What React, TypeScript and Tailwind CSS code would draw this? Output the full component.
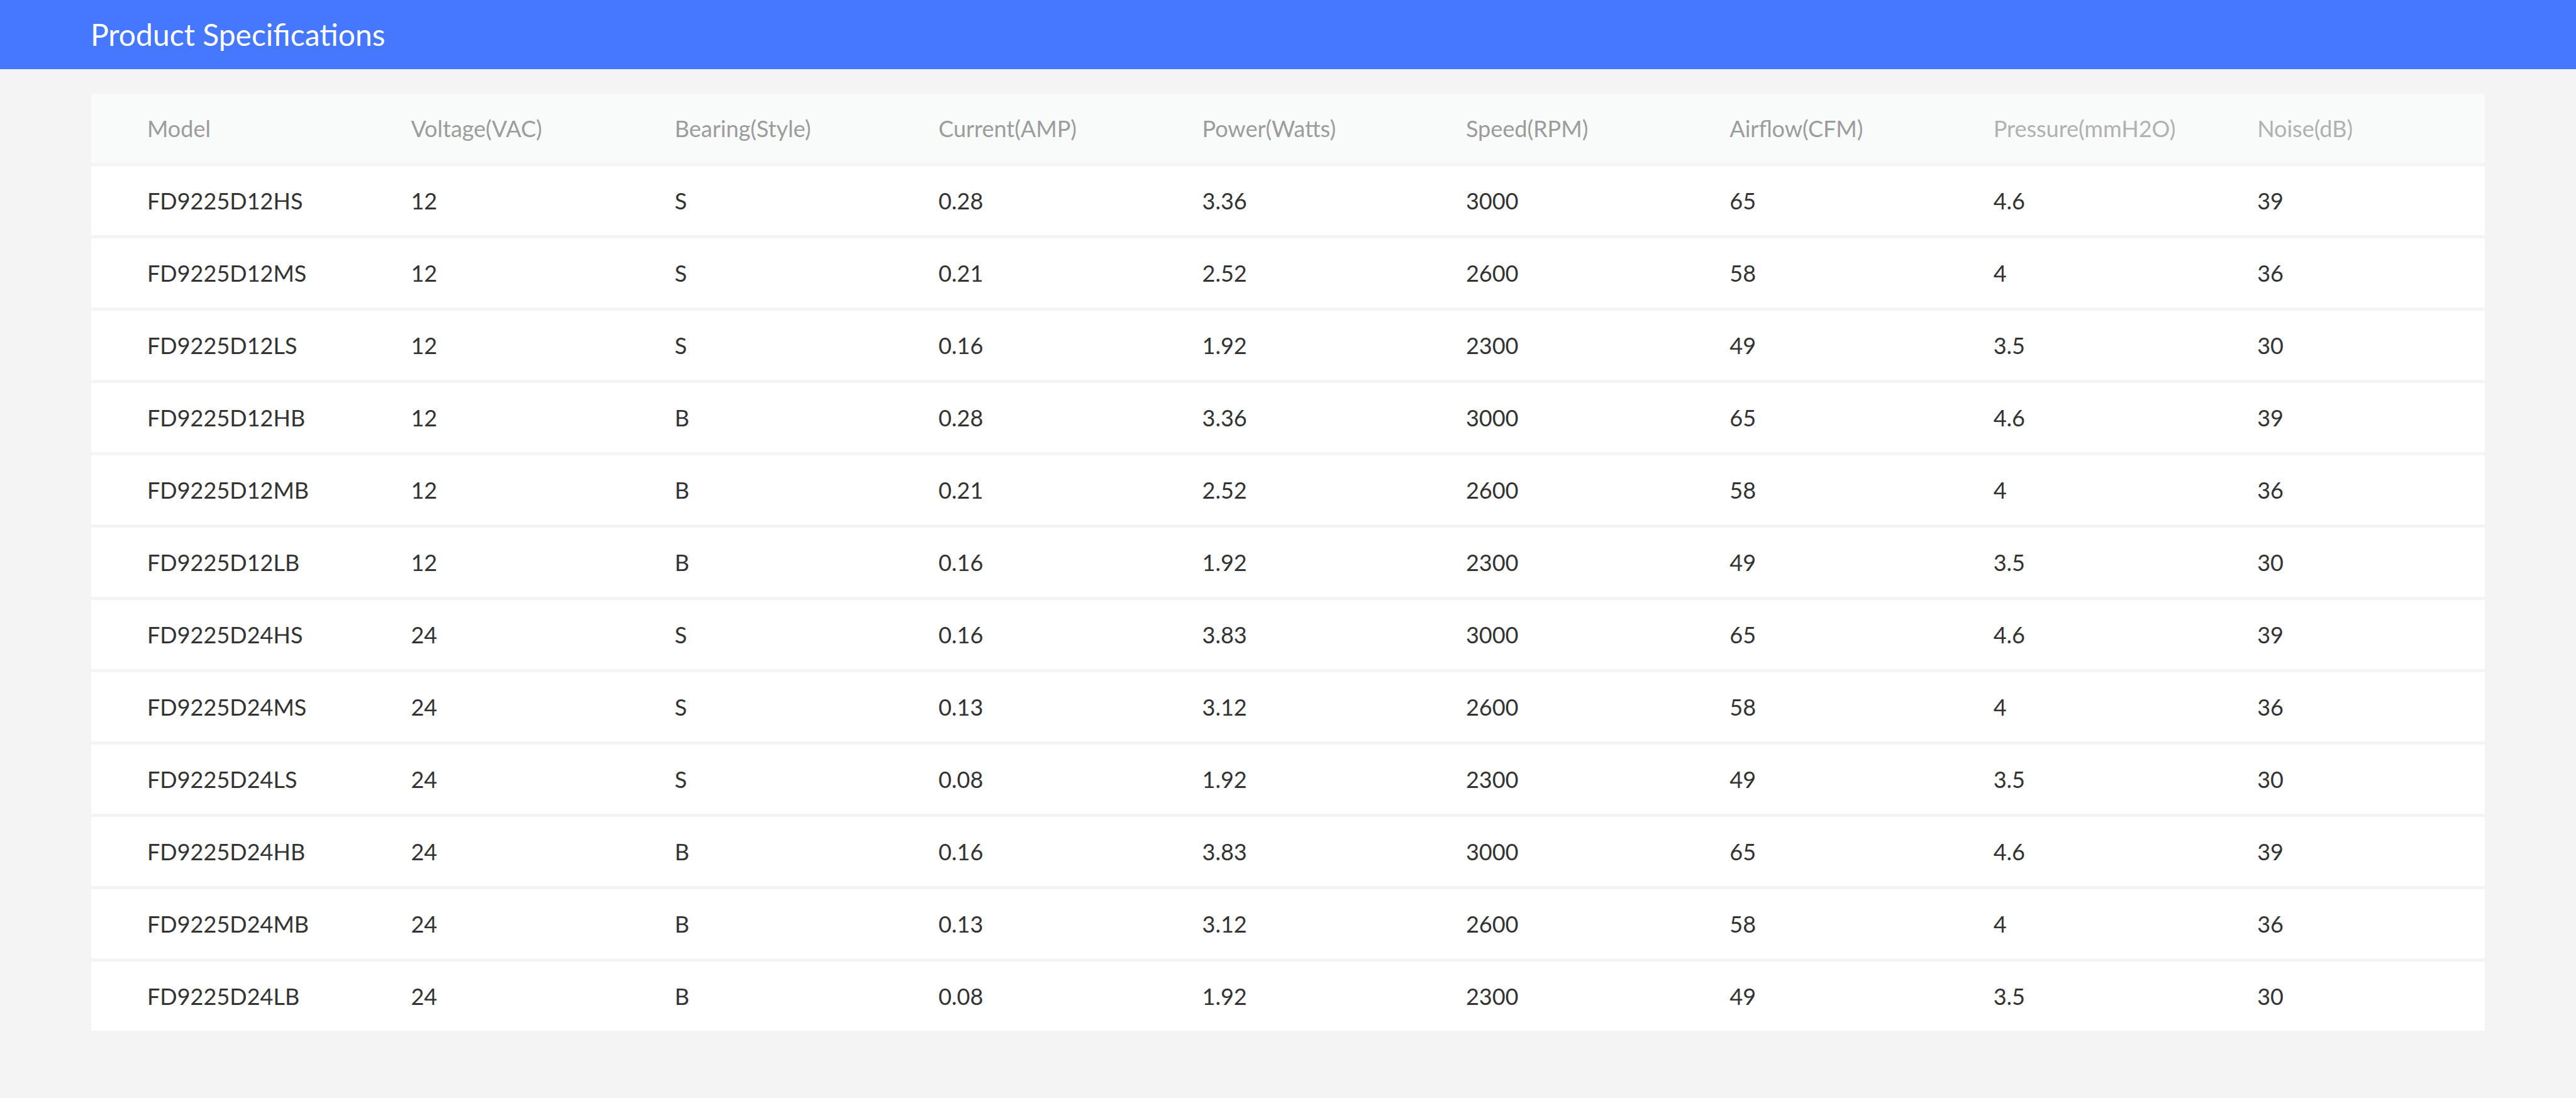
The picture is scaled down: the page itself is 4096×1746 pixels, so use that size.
import React from "react";

const headers = [
  "Model",
  "Voltage(VAC)",
  "Bearing(Style)",
  "Current(AMP)",
  "Power(Watts)",
  "Speed(RPM)",
  "Airflow(CFM)",
  "Pressure(mmH2O)",
  "Noise(dB)",
];

const rows: string[][] = [
  ["FD9225D12HS", "12", "S", "0.28", "3.36", "3000", "65", "4.6", "39"],
  ["FD9225D12MS", "12", "S", "0.21", "2.52", "2600", "58", "4", "36"],
  ["FD9225D12LS", "12", "S", "0.16", "1.92", "2300", "49", "3.5", "30"],
  ["FD9225D12HB", "12", "B", "0.28", "3.36", "3000", "65", "4.6", "39"],
  ["FD9225D12MB", "12", "B", "0.21", "2.52", "2600", "58", "4", "36"],
  ["FD9225D12LB", "12", "B", "0.16", "1.92", "2300", "49", "3.5", "30"],
  ["FD9225D24HS", "24", "S", "0.16", "3.83", "3000", "65", "4.6", "39"],
  ["FD9225D24MS", "24", "S", "0.13", "3.12", "2600", "58", "4", "36"],
  ["FD9225D24LS", "24", "S", "0.08", "1.92", "2300", "49", "3.5", "30"],
  ["FD9225D24HB", "24", "B", "0.16", "3.83", "3000", "65", "4.6", "39"],
  ["FD9225D24MB", "24", "B", "0.13", "3.12", "2600", "58", "4", "36"],
  ["FD9225D24LB", "24", "B", "0.08", "1.92", "2300", "49", "3.5", "30"],
];

const gridCols = "grid grid-cols-[repeat(8,419.4px)_1fr] items-center pl-[89px]";

export default function App() {
  return (
    <div
      className="min-h-[1746px] w-full bg-[#f3f4f3]"
      style={{ fontFamily: "Lato, 'Noto Sans', sans-serif" }}
    >
      <header className="flex h-[110px] items-center bg-[#4578ff] pl-[144px]">
        <h1 className="text-[48px] font-normal leading-none text-white">
          Product Specifications
        </h1>
      </header>
      <main className="px-[145px] pt-[39px]">
        <div className="flex flex-col gap-[5px]">
          <div className={`${gridCols} h-[110px] bg-[#f9fafa]`}>
            {headers.map((h, i) => (
              <div
                key={h}
                className={`text-[36px] leading-none whitespace-nowrap ${
                  i >= 7 ? "text-[#b1b1b1]" : "text-[#9c9c9c]"
                }`}
              >
                {h}
              </div>
            ))}
          </div>
          {rows.map((r) => (
            <div key={r[0]} className={`${gridCols} h-[110px] bg-white`}>
              {r.map((c, i) => (
                <div
                  key={i}
                  className="text-[36px] leading-none text-[#333333] whitespace-nowrap"
                >
                  {c}
                </div>
              ))}
            </div>
          ))}
        </div>
      </main>
    </div>
  );
}
